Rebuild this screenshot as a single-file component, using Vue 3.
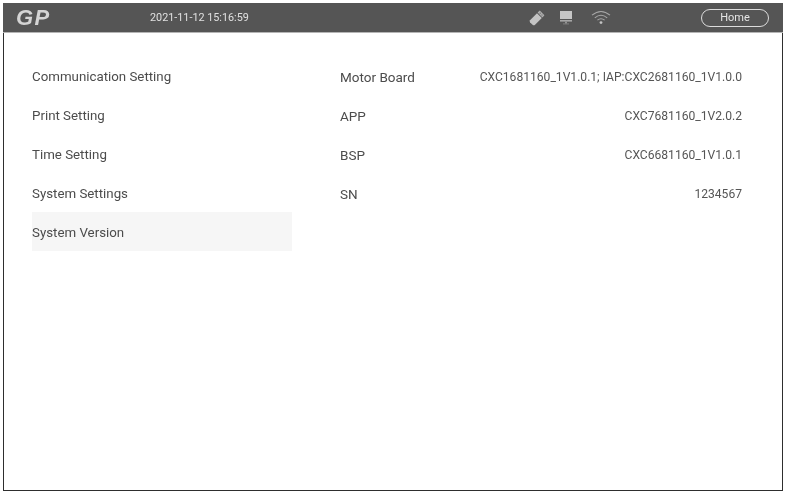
<script setup>
const menu = [
  { label: 'Communication Setting', active: false },
  { label: 'Print Setting', active: false },
  { label: 'Time Setting', active: false },
  { label: 'System Settings', active: false },
  { label: 'System Version', active: true },
]
const rows = [
  { name: 'Motor Board', value: 'CXC1681160_1V1.0.1; IAP:CXC2681160_1V1.0.0' },
  { name: 'APP', value: 'CXC7681160_1V2.0.2' },
  { name: 'BSP', value: 'CXC6681160_1V1.0.1' },
  { name: 'SN', value: '1234567' },
]
</script>

<template>
  <div class="page">
    <div class="frame">
      <header class="bar">
        <span class="logo">GP</span>
        <span class="clock">2021-11-12 15:16:59</span>
        <div class="icons">
          <svg class="usb" width="16" height="16" viewBox="0 0 16 16">
            <path d="M1 10.2 L8 3.2 L12.8 8 L5.8 15 Q4.8 15.6 3.8 15 L1 12.2 Q0.4 11.2 1 10.2Z" fill="#c4c4c4" />
            <path d="M8.6 2.6 L10.8 0.6 L15.4 5.2 L13.4 7.4Z" fill="#b0b0b0" />
            <rect x="10.6" y="2.6" width="1.2" height="1.2" transform="rotate(45 11.2 3.2)" fill="#707070" />
            <rect x="12.4" y="4.4" width="1.2" height="1.2" transform="rotate(45 13 5)" fill="#707070" />
          </svg>
          <svg class="screen" width="14" height="15" viewBox="0 0 14 15">
            <rect x="1" y="1" width="12" height="8" fill="#c6c6c6" />
            <rect x="1" y="10" width="12" height="1.6" fill="#a6a6a6" />
            <rect x="6" y="11.6" width="2" height="2" fill="#949494" />
            <rect x="4" y="13.4" width="6" height="1" fill="#808080" />
          </svg>
          <svg class="wifi" width="20" height="15" viewBox="0 0 20 15" fill="none" stroke="#a8a8a8" stroke-width="1.1">
            <path d="M1 5.2 Q10 -2.2 19 5.2" />
            <path d="M3.8 7.8 Q10 2.6 16.2 7.8" />
            <path d="M6.4 10.2 Q10 7.2 13.6 10.2" />
            <circle cx="10" cy="12.6" r="1.4" fill="#c4c4c4" stroke="none" />
          </svg>
        </div>
        <button class="home">Home</button>
      </header>
      <main class="content">
        <nav class="menu">
          <div v-for="m in menu" :key="m.label" class="item" :class="{ active: m.active }">{{ m.label }}</div>
        </nav>
        <section class="info">
          <div v-for="r in rows" :key="r.name" class="row">
            <span class="name">{{ r.name }}</span>
            <span class="value">{{ r.value }}</span>
          </div>
        </section>
      </main>
    </div>
  </div>
</template>

<style>
html, body { margin: 0; background: #fff; }
</style>

<style scoped>
.page {
  width: 787px;
  height: 495px;
  padding: 3px 4px 4px 3px;
  box-sizing: border-box;
  background: #fff;
  font-family: Roboto, "Liberation Sans", sans-serif;
}
.frame {
  height: 100%;
  box-sizing: border-box;
  border: 1px solid #2e2e2e;
  border-top: 0;
  display: flex;
  flex-direction: column;
  filter: blur(0.35px);
}
.bar {
  height: 30px;
  flex: none;
  margin: 0 -1px;
  background: #555;
  border-bottom: 1px solid #b5b5b5;
  box-sizing: border-box;
  display: flex;
  align-items: center;
  color: #e6e6e6;
}
.logo {
  width: 147px;
  padding-left: 13px;
  box-sizing: border-box;
  font: italic 900 22px/1 "Liberation Sans", sans-serif;
  letter-spacing: 1.5px;
  color: #d4d4d4;
}
.clock {
  font-size: 10.8px;
  color: #e0e0e0;
  width: 381px;
}
.icons {
  display: flex;
  align-items: center;
  width: 172px;
  margin-left: -2px;
}
.screen { margin: 0 18px 0 14px; }
.home {
  width: 68px;
  height: 18px;
  padding: 0;
  border: 1px solid #dcdcdc;
  border-radius: 9px;
  background: transparent;
  color: #e4e4e4;
  font: 11px Roboto, "Liberation Sans", sans-serif;
}
.content {
  flex: 1;
  display: flex;
  padding-top: 23px;
  background: #fff;
}
.menu {
  width: 260px;
  margin-left: 28px;
}
.item {
  height: 39px;
  line-height: 42px;
  font-size: 13.3px;
  color: #4c4c4c;
}
.item.active { background: #f6f6f6; }
.info {
  width: 402px;
  margin-left: 48px;
}
.row {
  height: 39px;
  display: flex;
  justify-content: space-between;
  align-items: center;
  color: #4c4c4c;
}
.name { font-size: 13.5px; padding-top: 2px; }
.value { font-size: 12.1px; color: #555; padding-top: 2px; }
</style>
